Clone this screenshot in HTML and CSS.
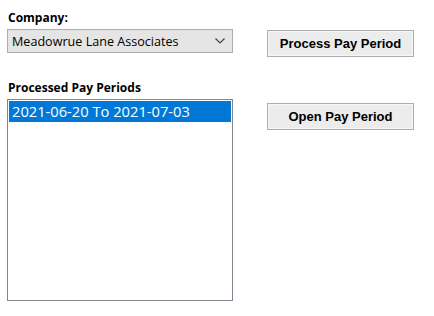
FILE: index.html
```html
<!DOCTYPE html>
<html lang="en">
<head>
  <meta charset="UTF-8" />
  <title>Pay Periods</title>
  <link rel="stylesheet" href="styles.css">
</head>
<body>
  <div class="form">
    <div class="left">
      <label class="field-label" for="company">Company:</label>
      <div class="combo" id="company">
        <span>Meadowrue Lane Associates</span>
        <svg class="chevron" width="10" height="6" viewBox="0 0 10 6"><path d="M0.5 0.5 L5 5 L9.5 0.5" fill="none" stroke="#444" stroke-width="1.2"/></svg>
      </div>

      <label class="field-label periods-label">Processed Pay Periods</label>
      <div class="listbox">
        <div class="item selected">2021-06-20 To 2021-07-03</div>
      </div>
    </div>

    <div class="right">
      <button class="btn process">Process Pay Period</button>
      <button class="btn open">Open Pay Period</button>
    </div>
  </div>
</body>
</html>
```

FILE: styles.css
```css
* { box-sizing: border-box; }
body {
  margin: 0;
  background: #fff;
  font-family: 'Open Sans', 'Noto Sans', sans-serif;
  color: #000;
}

.form {
  display: flex;
  padding: 10px 0 0 7px;
}

.left {
  width: 226px;
  display: flex;
  flex-direction: column;
}

.field-label {
  font-size: 12px;
  font-weight: 700;
  line-height: 16px;
  padding-left: 1px;
  height: 19px;
}

.combo {
  height: 24px;
  border: 1px solid #adadad;
  background: #e5e5e5;
  display: flex;
  align-items: center;
  justify-content: space-between;
  padding: 0 7px 0 4px;
  font-size: 12.6px;
}

.periods-label {
  margin-top: 27px;
}

.listbox {
  height: 202px;
  border: 1px solid #828790;
  background: #fff;
  padding: 1px;
}

.item {
  font-size: 14.7px;
  line-height: 21px;
  padding-left: 3px;
}

.item.selected {
  background: #0078d7;
  color: #fff;
}

.right {
  margin-left: 34px;
  padding-top: 20px;
  display: flex;
  flex-direction: column;
  gap: 46px;
}

.btn {
  width: 147px;
  height: 27px;
  border: 1px solid #adadad;
  background: #ececec;
  font-family: 'Liberation Sans', Arial, sans-serif;
  font-weight: 700;
  font-size: 13px;
  color: #000;
  padding: 0;
  box-shadow: inset 0 0 0 1px #f6f6f6;
}
```
